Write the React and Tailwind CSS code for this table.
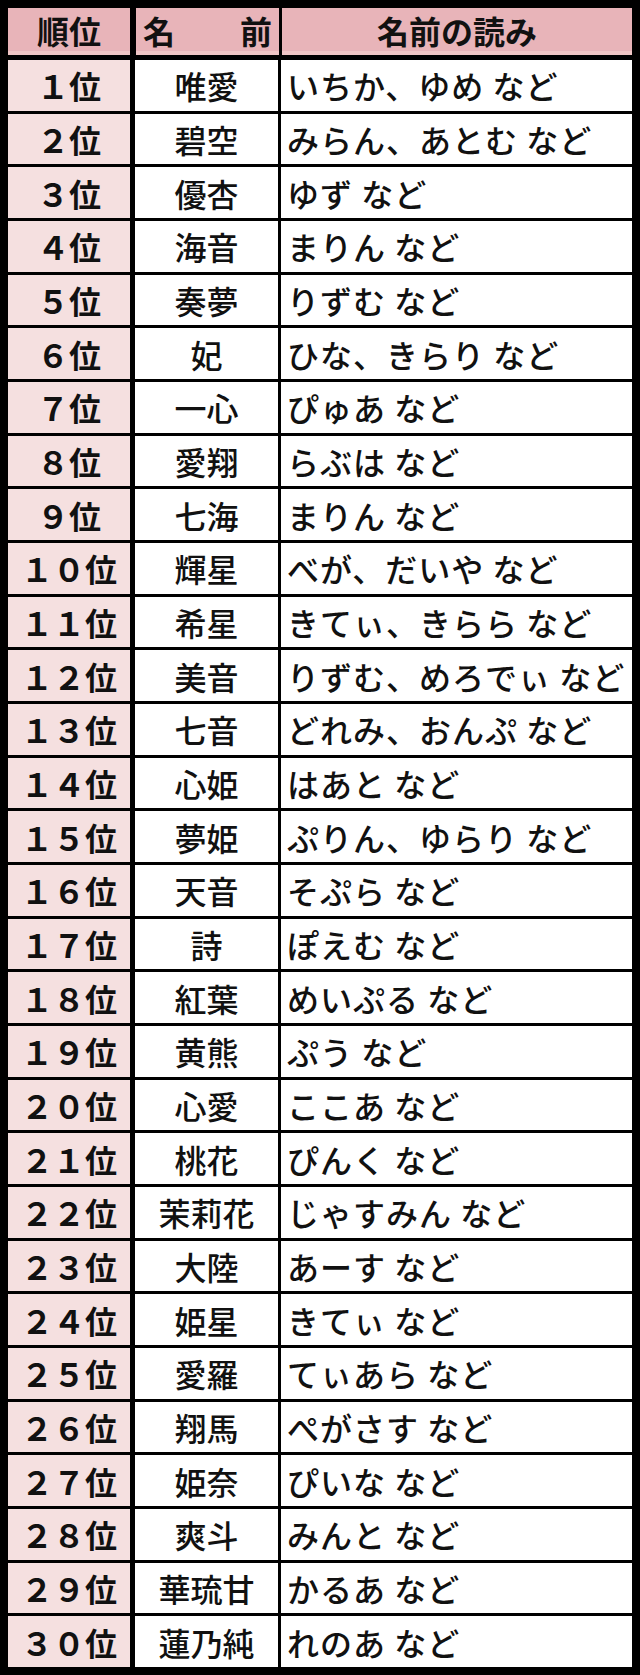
const rows = [
  ["１位", "唯愛", "いちか、ゆめ など"],
  ["２位", "碧空", "みらん、あとむ など"],
  ["３位", "優杏", "ゆず など"],
  ["４位", "海音", "まりん など"],
  ["５位", "奏夢", "りずむ など"],
  ["６位", "妃", "ひな、きらり など"],
  ["７位", "一心", "ぴゅあ など"],
  ["８位", "愛翔", "らぶは など"],
  ["９位", "七海", "まりん など"],
  ["１０位", "輝星", "べが、だいや など"],
  ["１１位", "希星", "きてぃ、きらら など"],
  ["１２位", "美音", "りずむ、めろでぃ など"],
  ["１３位", "七音", "どれみ、おんぷ など"],
  ["１４位", "心姫", "はあと など"],
  ["１５位", "夢姫", "ぷりん、ゆらり など"],
  ["１６位", "天音", "そぷら など"],
  ["１７位", "詩", "ぽえむ など"],
  ["１８位", "紅葉", "めいぷる など"],
  ["１９位", "黄熊", "ぷう など"],
  ["２０位", "心愛", "ここあ など"],
  ["２１位", "桃花", "ぴんく など"],
  ["２２位", "茉莉花", "じゃすみん など"],
  ["２３位", "大陸", "あーす など"],
  ["２４位", "姫星", "きてぃ など"],
  ["２５位", "愛羅", "てぃあら など"],
  ["２６位", "翔馬", "ぺがさす など"],
  ["２７位", "姫奈", "ぴいな など"],
  ["２８位", "爽斗", "みんと など"],
  ["２９位", "華琉甘", "かるあ など"],
  ["３０位", "蓮乃純", "れのあ など"],
];

const font = { fontFamily: '"Noto Sans CJK JP", "Noto Sans", sans-serif' };

export default function App() {
  return (
    <div
      className="w-[640px] h-[1675px] bg-black p-2 flex flex-col text-[32px] leading-none text-[#111]"
      style={font}
    >
      {/* Header */}
      <div className="flex h-[47px] shrink-0 font-bold">
        <div className="w-[122px] flex items-center justify-center bg-[#e8b4b9] border-b-4 border-[#f0c6c6]">
          順位
        </div>
        <div className="w-[143px] ml-[6px] flex items-center justify-between px-[7px] bg-[#e8b4b9] border-b-4 border-[#f0c6c6]">
          <span>名</span>
          <span>前</span>
        </div>
        <div className="flex-1 ml-[3px] flex items-center justify-center bg-[#e8b4b9] border-b-4 border-[#f0c6c6]">
          名前の読み
        </div>
      </div>

      {/* Body */}
      <div className="mt-[5px] flex-1 flex flex-col gap-[3px]">
        {rows.map(([rank, name, reading]) => (
          <div key={rank} className="flex flex-1">
            <div className="w-[122px] flex items-center justify-center bg-[#f5e0e0] font-semibold">
              {rank}
            </div>
            <div className="w-[143px] ml-[5px] flex items-center justify-center bg-white font-medium">
              {name}
            </div>
            <div className="flex-1 ml-[3px] flex items-center pl-[6px] bg-white font-medium tracking-[1px] whitespace-nowrap">
              {reading}
            </div>
          </div>
        ))}
      </div>
    </div>
  );
}
